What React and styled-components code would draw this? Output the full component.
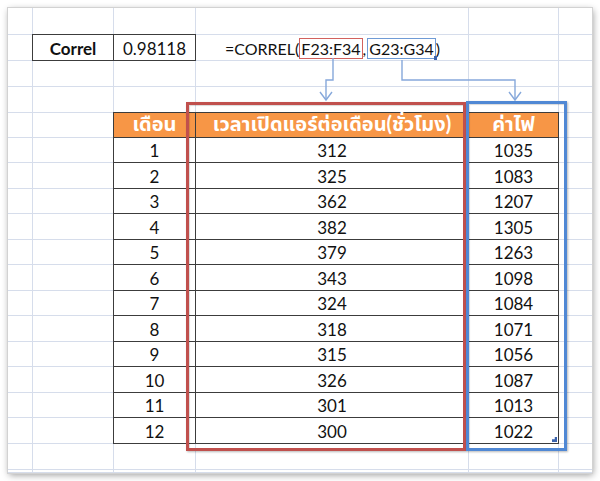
import React from 'react';
import styled, { createGlobalStyle } from 'styled-components';

const GlobalStyle = createGlobalStyle`
  html, body {
    margin: 0;
    padding: 0;
    background: #fff;
  }
  body {
    font-family: Lato, "Noto Sans Thai", "Noto Sans Thai UI", Garuda, Loma, "Tlwg Typo", "DejaVu Sans", sans-serif;
  }
`;

const gridline = '#d6ddeb';
const ink = '#3c3c3c';

const SHEET_ROWS = 19;
const SHEET_COLS = 6;

const months = [
  [1, 312, 1035],
  [2, 325, 1083],
  [3, 362, 1207],
  [4, 382, 1305],
  [5, 379, 1263],
  [6, 343, 1098],
  [7, 324, 1084],
  [8, 318, 1071],
  [9, 315, 1056],
  [10, 326, 1087],
  [11, 301, 1013],
  [12, 300, 1022],
];

const Page = styled.div`
  padding: 8px;
  width: 584px;
  height: 465px;
`;

const Frame = styled.div`
  position: relative;
  width: 584px;
  height: 465px;
  background: #fff;
  box-shadow: 0 0 0 1px #d2d2d2, 1px 2px 7px rgba(0, 0, 0, 0.4);
`;

const Sheet = styled.div`
  display: grid;
  width: 100%;
  height: 100%;
  grid-template-columns: 25px 81px 82px 273px 90px 1fr;
  grid-template-rows: 27px 26px 26px 26px 25px repeat(6, 25px 26px) 26px 1fr;
  overflow: hidden;
`;

const GridCell = styled.div`
  box-sizing: border-box;
  grid-row: ${p => p.$row};
  grid-column: ${p => p.$col};
  border-right: ${p => (p.$last ? 'none' : `1px solid ${gridline}`)};
  border-bottom: 1px solid ${gridline};
`;

const CorrelBox = styled.div`
  grid-row: 2;
  grid-column: 2 / 4;
  margin: -1px 0 0 -1px;
  display: grid;
  grid-template-columns: 81px 82px;
  border-top: 1px solid ${ink};
  border-left: 1px solid ${ink};
  background: #fff;
  z-index: 1;
`;

const Cell = styled.div`
  box-sizing: border-box;
  display: flex;
  align-items: center;
  justify-content: center;
  border-right: 1px solid ${ink};
  border-bottom: 1px solid ${ink};
  font-size: 17px;
  font-weight: ${p => (p.$bold ? 700 : 400)};
  color: #111;
  padding-top: 1px;
  position: relative;
`;

const HeadCell = styled(Cell)`
  background: #f79646;
  color: #fff;
  font-weight: 700;
  font-size: 20px;
  padding-top: 0;
`;

const Formula = styled.div`
  grid-row: 2;
  grid-column: 4;
  display: flex;
  align-items: center;
  justify-content: center;
  font-size: 16px;
  color: #111;
  white-space: nowrap;
  z-index: 1;
  padding-top: 1px;
`;

const RangeRef = styled.span`
  position: relative;
  display: inline-block;
  border: 1px solid ${p => p.$color};
  padding: 1px;
  margin-left: ${p => p.$gap}px;
  line-height: 17px;
`;

const RangeHandle = styled.span`
  position: absolute;
  right: -2px;
  bottom: -2px;
  width: 3px;
  height: 4px;
  background: #3b62aa;
`;

const DataTable = styled.div`
  grid-row: 5 / 18;
  grid-column: 3 / 6;
  margin: -1px 0 0 -1px;
  display: grid;
  grid-template-columns: 82px 273px 90px;
  grid-template-rows: 25px repeat(6, 25px 26px);
  border-top: 1px solid ${ink};
  border-left: 1px solid ${ink};
  background: #fff;
  z-index: 1;
`;

const FillHandle = styled.span`
  position: absolute;
  right: 1px;
  bottom: 1px;
  width: 5px;
  height: 5px;
  background: #3a63ad;
  clip-path: polygon(100% 0, 100% 100%, 0 100%, 0 45%, 55% 45%, 55% 0);
`;

const Highlight = styled.div`
  position: absolute;
  box-sizing: border-box;
  left: ${p => p.$x}px;
  top: ${p => p.$y}px;
  width: ${p => p.$w}px;
  height: ${p => p.$h}px;
  border: 3px solid ${p => p.$color};
  box-shadow: 1px 1px 2px rgba(0, 0, 0, 0.28), inset 1px 1px 1px rgba(0, 0, 0, 0.15);
  pointer-events: none;
  z-index: 3;
`;

const Arrows = styled.svg`
  position: absolute;
  left: 0;
  top: 0;
  width: 584px;
  height: 465px;
  z-index: 2;
  pointer-events: none;
`;

function SheetGrid() {
  const cells = [];
  for (let r = 1; r <= SHEET_ROWS; r++) {
    for (let c = 1; c <= SHEET_COLS; c++) {
      cells.push(<GridCell key={`${r}-${c}`} $row={r} $col={c} $last={c === SHEET_COLS} />);
    }
  }
  return cells;
}

const App = () => (
  <>
    <GlobalStyle />
    <Page>
      <Frame>
        <Sheet>
          <SheetGrid />

          <CorrelBox>
            <Cell $bold>Correl</Cell>
            <Cell>0.98118</Cell>
          </CorrelBox>

          <Formula>
            =CORREL(
            <RangeRef $color="#d2625f" $gap={0}>F23:F34</RangeRef>
            ,
            <RangeRef $color="#6f9bd6" $gap={1}>
              G23:G34
              <RangeHandle />
            </RangeRef>
            )
          </Formula>

          <DataTable>
            <HeadCell>เดือน</HeadCell>
            <HeadCell>เวลาเปิดแอร์ต่อเดือน(ชั่วโมง)</HeadCell>
            <HeadCell>ค่าไฟ</HeadCell>
            {months.map(([m, hours, cost], i) => (
              <React.Fragment key={m}>
                <Cell>{m}</Cell>
                <Cell>{hours}</Cell>
                <Cell>
                  {cost}
                  {i === months.length - 1 && <FillHandle />}
                </Cell>
              </React.Fragment>
            ))}
          </DataTable>
        </Sheet>

        <Arrows viewBox="8 8 584 465">
          <g fill="none" stroke="#86a8db" strokeWidth="1.4">
            <path d="M333 58 V80 H326 V100" />
            <path d="M320 92 L326 100 L332 92" />
            <path d="M402 60 V80 H515 V100" />
            <path d="M509 92 L515 100 L521 92" />
          </g>
        </Arrows>

        <Highlight $x={178} $y={94} $w={280} $h={349} $color="#c0504d" />
        <Highlight $x={458} $y={93} $w={101} $h={350} $color="#5088d4" />
      </Frame>
    </Page>
  </>
);

export default App;
